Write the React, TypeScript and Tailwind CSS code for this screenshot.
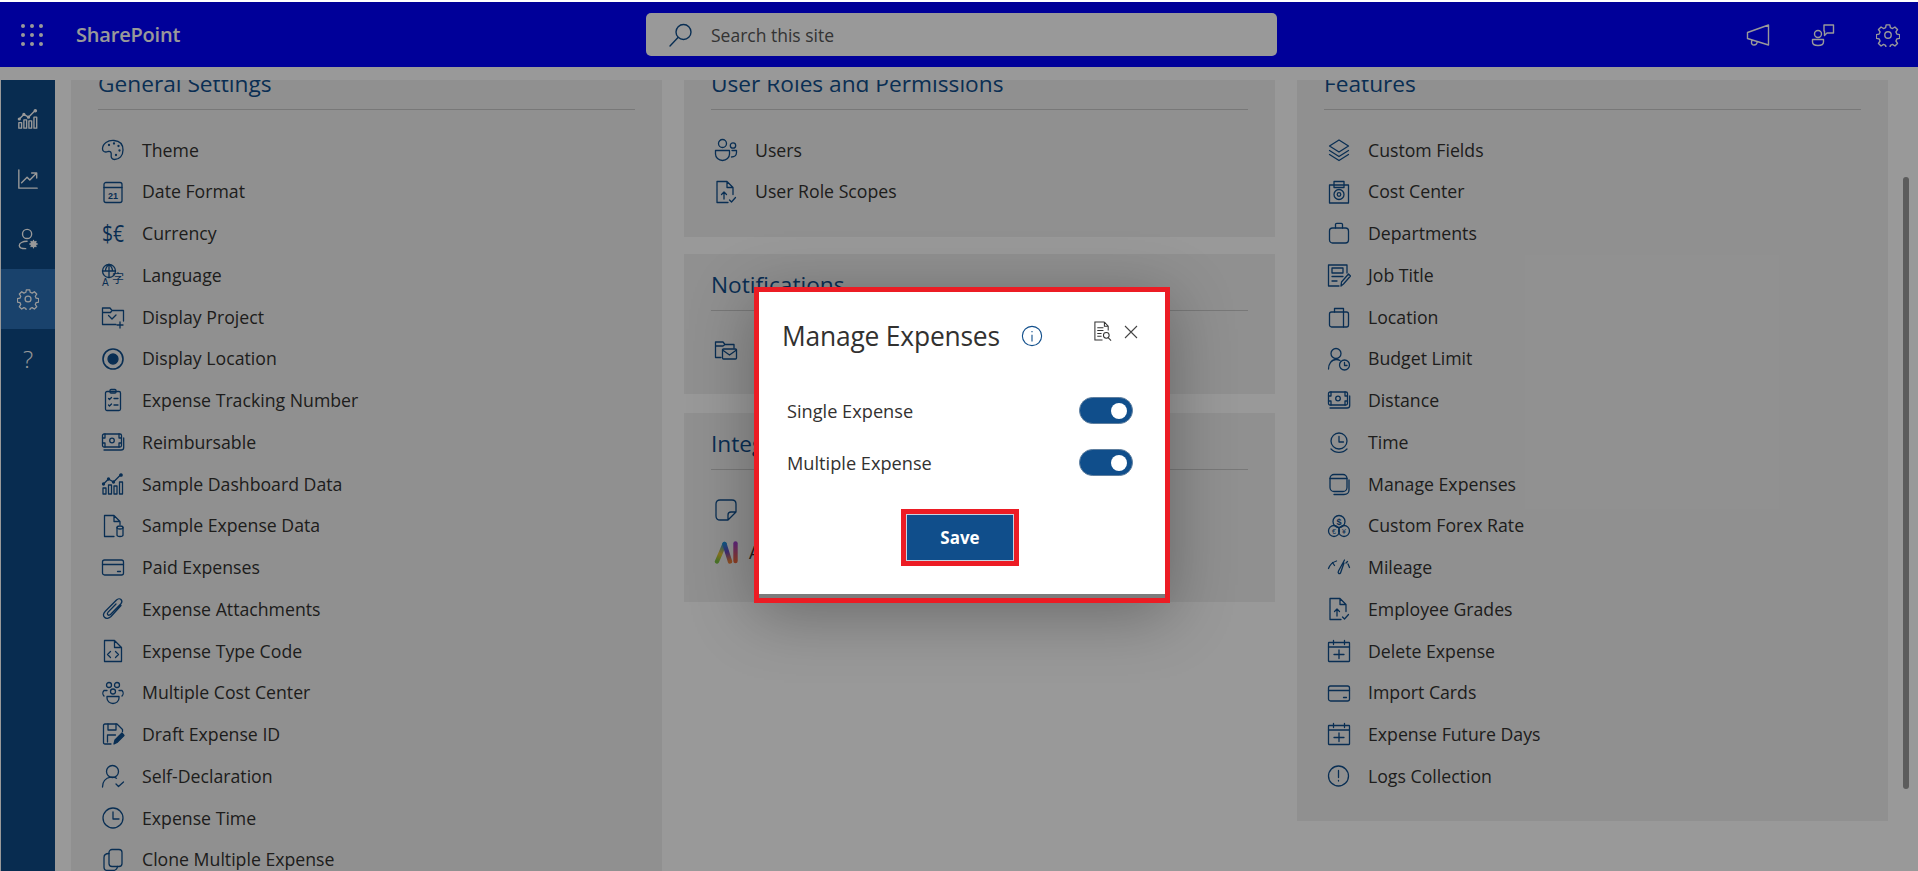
import React from "react";

const BLUE = "#104e8b";

function Ico({ children }: { children: React.ReactNode }) {
  return (
    <svg viewBox="0 0 24 24" className="w-6 h-6 shrink-0" fill="none" stroke={BLUE} strokeWidth={1.3} strokeLinecap="round" strokeLinejoin="round">
      {children}
    </svg>
  );
}

const Bars = () => (
  <>
    <path d="M2 22v-6h3v6zM7.5 22v-9h3v9zM13 22v-8h3v8zM18.5 22V10h3v12z" />
    <path d="M2.5 12l5-5 5 3 7-7" />
    <circle cx="2.5" cy="12" r="1" fill="currentColor" />
    <circle cx="7.5" cy="7" r="1" fill="currentColor" />
    <circle cx="12.5" cy="10" r="1" fill="currentColor" />
    <circle cx="20" cy="3" r="1.2" fill="currentColor" />
  </>
);
const Money = () => (
  <>
    <rect x="1.5" y="4" width="19" height="13" rx="1.5" />
    <circle cx="11" cy="10.5" r="2.3" />
    <path d="M1.5 8h2.5V4M20.5 8H18V4M1.5 13H4v4M20.5 13H18v4M3 20h17c1.6 0 2.7-1 2.7-2.6V8" />
  </>
);
const Card = () => (
  <>
    <rect x="1.5" y="5" width="21" height="15" rx="2" />
    <path d="M1.5 9.5h21M16.5 16.5h3" />
  </>
);
const CalPlus = () => (
  <>
    <rect x="1.5" y="3.5" width="21" height="19" rx="0.5" />
    <path d="M1.5 8h21M6.5 1.5v4M17.5 1.5v4M12 11v8.5M7 15.5h10" />
  </>
);
const FileUp = () => (
  <>
    <path d="M13 1.5H3v21h11M13 1.5l6 6v7M13 1.5v6h6" />
    <path d="M10 19v-7M7.5 14.5L10 12l2.5 2.5M15.5 20l2 2 4-4.5" />
  </>
);

const icons: Record<string, React.ReactNode> = {
  theme: (
    <Ico>
      <path d="M13 2.5C7 2 1.5 5.5 1.5 11c0 3 3 3.5 5.5 2.5 2.5-.7 3.5 1 3.2 3.4-.4 2.7.8 4.6 3.3 4.6 5 0 8.5-4 8.5-9.5S18.5 3 13 2.5z" />
      <circle cx="8" cy="7" r=".5" fill={BLUE} />
      <circle cx="13" cy="5.5" r=".5" fill={BLUE} />
      <circle cx="17.5" cy="8" r=".5" fill={BLUE} />
      <circle cx="18.5" cy="12.5" r=".5" fill={BLUE} />
      <circle cx="15" cy="17" r=".5" fill={BLUE} />
    </Ico>
  ),
  date: (
    <Ico>
      <rect x="3" y="2.5" width="18" height="20" rx="2" />
      <path d="M3 7.5h18" />
      <text x="12" y="18.5" textAnchor="middle" fontSize="9" fontWeight="700" fill={BLUE} stroke="none" fontFamily="'Liberation Sans', sans-serif">21</text>
    </Ico>
  ),
  currency: (
    <Ico>
      <text x="12" y="20.500" textAnchor="middle" fontSize="24" fontWeight="400" fill={BLUE} stroke="none" fontFamily="'Open Sans', sans-serif" textLength="22" lengthAdjust="spacingAndGlyphs">$€</text>
    </Ico>
  ),
  language: (
    <Ico>
      <circle cx="8" cy="8" r="6.5" />
      <path d="M1.5 8h13M8 1.5v13M4.5 8c0-3 1.500-5 3.500-6.500M11.500 8c0-3-1.500-5-3.500-6.500" />
      <text x="1" y="23" fontSize="10" fill={BLUE} stroke="none" fontFamily="'Liberation Sans', sans-serif">A</text>
      <text x="11" y="20" fontSize="12" fill={BLUE} stroke="none" fontFamily="'Noto Sans CJK SC', sans-serif">字</text>
    </Ico>
  ),
  project: (
    <Ico>
      <path d="M15 19.500H1.500V3h7.500l2 2.500h11.500V16M1.500 7.500h8l1.500-2" />
      <path d="M7.500 10.500L11 14l4-4M19 17v6M16 20h6" />
    </Ico>
  ),
  location: (
    <Ico>
      <circle cx="12" cy="12" r="10" strokeWidth={1.6} />
      <circle cx="12" cy="12" r="5" fill={BLUE} />
    </Ico>
  ),
  tracking: (
    <Ico>
      <rect x="4.500" y="3.500" width="15" height="19" rx="1.500" />
      <rect x="9" y="1.500" width="6" height="3.500" rx="1" />
      <path d="M7.500 10.500l1 1 2-2M13 10.500h4M7.500 17l1 1 2-2M13 17h4" />
    </Ico>
  ),
  money: <Ico><Money /></Ico>,
  bars: <Ico><g className="text-[#104e8b]"><Bars /></g></Ico>,
  sampleExp: (
    <Ico>
      <path d="M13 1.500H3.500v21H13M13 1.500l6 6v3M13 1.500v6h6" />
      <ellipse cx="19" cy="13.500" rx="3" ry="1.500" />
      <path d="M16 13.500v7.500c0 1 1.300 1.500 3 1.500s3-.5 3-1.500v-7.500" />
    </Ico>
  ),
  card: <Ico><Card /></Ico>,
  clip: (
    <Ico>
      <path d="M20 8.500l-10 11c-2 2-5 2.500-6.500.8-1.500-1.500-1-4 .8-6L15.500 3c1.500-1.500 3.500-1.500 4.500-.5 1.200 1.200 1 3-.3 4.500L9.500 17.500c-.8.8-2 1-2.700.3-.7-.7-.5-1.800.3-2.700L15 7" />
    </Ico>
  ),
  code: (
    <Ico>
      <path d="M13.500 1.500H3.500v21h17V8.500zM13.500 1.500v7h7" />
      <path d="M9.500 12.500l-3 3 3 3M14.500 12.500l3 3-3 3" />
    </Ico>
  ),
  costGroup: (
    <Ico>
      <circle cx="8" cy="4" r="2.500" />
      <circle cx="16" cy="4" r="2.500" />
      <circle cx="12" cy="10.500" r="2.500" />
      <path d="M3 15c-1.500-1.500-1.500-4 0-5.500h3M21 15c1.500-1.500 1.500-4 0-5.500h-3M6 15.500h12v1.500c0 3-2.500 5.500-6 5.500s-6-2.500-6-5.500z" />
    </Ico>
  ),
  draft: (
    <Ico>
      <path d="M10 22H4c-1 0-1.500-.5-1.500-1.500V3.500c0-1 .5-1.500 1.500-1.500h12l5.500 5.500v2" />
      <path d="M7 2v6h8V2M6.500 20v-7h8" />
      <path d="M13 22l1-4 7-7 2 2.500-7 7z" fill={BLUE} />
    </Ico>
  ),
  self: (
    <Ico>
      <circle cx="11.500" cy="7.500" r="6" />
      <path d="M1.500 23c0-5 3-9 8-9.800 2-.3 4.500 0 6 1M15 20l2.500 2.500L22.500 18" />
    </Ico>
  ),
  clock: (
    <Ico>
      <circle cx="12" cy="12" r="10" />
      <path d="M12 6v7h6" />
    </Ico>
  ),
  clone: (
    <Ico>
      <rect x="8" y="1.500" width="13" height="17" rx="3" />
      <path d="M8 5.500C5 5.500 3 7 3 9.500V19c0 2.500 1.500 3.500 3.500 3.500H12c2.500 0 4-1 4.500-4" />
    </Ico>
  ),
  users: (
    <Ico>
      <circle cx="8.500" cy="5.500" r="4" />
      <circle cx="19" cy="7.500" r="2.700" />
      <path d="M1.500 12.500h14v3.500c0 3.500-3 6.500-7 6.500s-7-3-7-6.500zM18 12.500h4.500v2c0 2.500-2 4.500-5 4.500" />
    </Ico>
  ),
  fileUp: <Ico><FileUp /></Ico>,
  mailFolder: (
    <Ico>
      <path d="M7 19.500H1.500V4H9l2 2.500h9V10M1.500 8h7.500l2-1.500" />
      <rect x="8.500" y="11" width="14" height="10" rx="1" />
      <path d="M8.500 12l7 5 7-5" />
    </Ico>
  ),
  note: (
    <Ico>
      <path d="M14 22H6c-2.500 0-4-1.500-4-4V6c0-2.500 1.500-4 4-4h12c2.500 0 4 1.500 4 4v8zM22 14h-5c-2 0-3 1-3 3v5" />
    </Ico>
  ),
  ai: (
    <svg viewBox="0 0 24 24" className="w-6 h-6 shrink-0" fill="none" strokeWidth={4.4} strokeLinecap="round" strokeLinejoin="round">
      <defs>
        <linearGradient id="aig1" gradientUnits="userSpaceOnUse" x1="3" y1="21" x2="10" y2="3">
          <stop offset="0" stopColor="#7cc243" />
          <stop offset="0.4" stopColor="#e8c030" />
          <stop offset="1" stopColor="#1f8fd8" />
        </linearGradient>
        <linearGradient id="aig2" gradientUnits="userSpaceOnUse" x1="10" y1="3" x2="16" y2="21">
          <stop offset="0" stopColor="#1f8fd8" />
          <stop offset="0.5" stopColor="#6a48c0" />
          <stop offset="1" stopColor="#e8803c" />
        </linearGradient>
        <linearGradient id="aig3" gradientUnits="userSpaceOnUse" x1="0" y1="3" x2="0" y2="21">
          <stop offset="0" stopColor="#a040c8" />
          <stop offset="1" stopColor="#e8643c" />
        </linearGradient>
      </defs>
      <path d="M3 21.500L10.500 4" stroke="url(#aig1)" />
      <path d="M10.500 4L16 21.500" stroke="url(#aig2)" />
      <path d="M21.500 3.500V21" stroke="url(#aig3)" />
    </svg>
  ),
  layers: (
    <Ico>
      <path d="M12 2L2.500 8l9.500 6 9.500-6zM2.500 12.500l9.500 6 9.500-6M2.500 16.500l9.500 6 9.500-6" />
    </Ico>
  ),
  costCenter: (
    <Ico>
      <rect x="2.500" y="5" width="19" height="18" />
      <rect x="7" y="1.500" width="10" height="6" fill="none" />
      <circle cx="12" cy="14.500" r="5" />
      <circle cx="12" cy="14.500" r="1.800" />
    </Ico>
  ),
  brief: (
    <Ico>
      <rect x="2.500" y="7" width="19" height="15" rx="3" />
      <path d="M8.500 7V3.500c0-.8.500-1.200 1.200-1.200h4.600c.7 0 1.200.4 1.200 1.200V7" />
    </Ico>
  ),
  job: (
    <Ico>
      <path d="M20 10V2H1.500v21H12" />
      <rect x="5" y="5" width="11" height="5" />
      <path d="M5 13.500h11M5 18h5M14 23l.5-4 7-8 2 2-7 8z" />
    </Ico>
  ),
  locBrief: (
    <Ico>
      <rect x="2.500" y="7" width="19" height="15" rx="2" />
      <path d="M7.500 7V3.500h9V7M16.500 7v15" />
    </Ico>
  ),
  budget: (
    <Ico>
      <circle cx="9" cy="6.500" r="5" />
      <path d="M1.500 22c0-5 3-9.500 7.500-9.500 1.500 0 3 .4 4 1" />
      <circle cx="17.500" cy="18" r="5" />
      <path d="M17.500 15.500V18.500h2.500" />
    </Ico>
  ),
  timeArc: (
    <Ico>
      <circle cx="12" cy="11" r="8" />
      <path d="M12 6.500V12h4.500M4 19c4.500 4.500 11.500 4.500 16 0" />
    </Ico>
  ),
  stack: (
    <Ico>
      <rect x="3" y="2.500" width="17" height="17" rx="4" />
      <path d="M3 6.500h17M22 8v10c0 2.500-2 4.500-5 4.500H7" />
    </Ico>
  ),
  forex: (
    <Ico>
      <circle cx="12" cy="7.500" r="6" />
      <circle cx="7" cy="17" r="5.500" />
      <circle cx="17" cy="17" r="5.500" />
      <text x="12" y="11" textAnchor="middle" fontSize="9" fontWeight="700" fill={BLUE} stroke="none" fontFamily="'Liberation Sans', sans-serif">$</text>
      <text x="7" y="20" textAnchor="middle" fontSize="7" fill={BLUE} stroke="none" fontFamily="'Liberation Sans', sans-serif">€</text>
      <text x="17" y="20" textAnchor="middle" fontSize="7" fill={BLUE} stroke="none" fontFamily="'Liberation Sans', sans-serif">¥</text>
    </Ico>
  ),
  gauge: (
    <Ico>
      <path d="M1.500 13.500C3 9.500 6 7 9.500 6M5.500 7.500l2 3M21 9l1.500 3.500M19 8l1.500-1.500M17.500 5l-6 11c-1 2 .5 3.500 2 2L17 8" />
    </Ico>
  ),
  calPlus: <Ico><CalPlus /></Ico>,
  alert: (
    <Ico>
      <circle cx="11.500" cy="12" r="10" />
      <path d="M11.500 6.500v7M11.500 16.500v.5" />
    </Ico>
  ),
};

const general: [string, string][] = [
  ["theme", "Theme"], ["date", "Date Format"], ["currency", "Currency"], ["language", "Language"],
  ["project", "Display Project"], ["location", "Display Location"], ["tracking", "Expense Tracking Number"],
  ["money", "Reimbursable"], ["bars", "Sample Dashboard Data"], ["sampleExp", "Sample Expense Data"],
  ["card", "Paid Expenses"], ["clip", "Expense Attachments"], ["code", "Expense Type Code"],
  ["costGroup", "Multiple Cost Center"], ["draft", "Draft Expense ID"], ["self", "Self-Declaration"],
  ["clock", "Expense Time"], ["clone", "Clone Multiple Expense"],
];
const features: [string, string][] = [
  ["layers", "Custom Fields"], ["costCenter", "Cost Center"], ["brief", "Departments"], ["job", "Job Title"],
  ["locBrief", "Location"], ["budget", "Budget Limit"], ["money", "Distance"], ["timeArc", "Time"],
  ["stack", "Manage Expenses"], ["forex", "Custom Forex Rate"], ["gauge", "Mileage"], ["fileUp", "Employee Grades"],
  ["calPlus", "Delete Expense"], ["card", "Import Cards"], ["calPlus", "Expense Future Days"], ["alert", "Logs Collection"],
];

function Row({ icon, label }: { icon: string; label: string }) {
  return (
    <div className={`flex items-center h-[41.75px] pl-[3px] ${icon === "ai" ? "gap-[11px]" : "gap-[17px]"}`}>
      {icons[icon]}
      <span className="text-[17.7px] text-[#323130] whitespace-nowrap">{label}</span>
    </div>
  );
}

function Section({ title, rows, className }: { title: string; rows: [string, string][]; className: string }) {
  return (
    <section className={`bg-[#f1f1f1] px-[27px] ${className}`}>
      <h2 className="h-[57px] pt-[15px] text-[22.7px] leading-[32px] text-[#104e8b] border-b border-[#c8c8c8] whitespace-nowrap">{title}</h2>
      <div className="pt-[19px]">
        {rows.map(([i, l]) => (
          <Row key={l} icon={i} label={l} />
        ))}
      </div>
    </section>
  );
}

function NavIcon({ children, active }: { children: React.ReactNode; active?: boolean }) {
  return (
    <div className={`h-[60px] flex items-center justify-center text-white ${active ? "bg-[#2a6fb5]" : ""}`}>
      <svg viewBox="0 0 24 24" className="w-[22px] h-[22px]" fill="none" stroke="#ffffff" strokeWidth={1.5} strokeLinecap="round" strokeLinejoin="round">
        {children}
      </svg>
    </div>
  );
}

const gearPath =
  "M10 2h4l.6 3 2.300 1 2.600-1.700 2.800 2.800-1.700 2.600 1 2.300 3 .6v4l-3 .6-1 2.300 1.700 2.600-2.800 2.800-2.600-1.700-2.300 1-.6 3h-4l-.6-3-2.300-1-2.600 1.700-2.800-2.800 1.700-2.600-1-2.300-3-.6v-4l3-.6 1-2.300-1.700-2.600 2.800-2.800 2.600 1.700 2.300-1z";

function Gear({ size = 24 }: { size?: number }) {
  return (
    <svg viewBox="-1 -1 26 26" width={size} height={size} fill="none" stroke="currentColor" strokeWidth={1.5} strokeLinejoin="round">
      <path d={gearPath} transform="translate(0 -1)" />
      <circle cx="12" cy="12" r="3.500" />
    </svg>
  );
}

function Toggle() {
  return (
    <div className="w-[54px] h-[27px] rounded-full bg-[#104e8b] border border-[#5f7f9f] flex items-center justify-end pr-[5px]">
      <div className="w-4 h-4 rounded-full bg-white" />
    </div>
  );
}

export default function App() {
  return (
    <div className="h-[871px] overflow-hidden bg-white" style={{ fontFamily: "'Open Sans', 'Noto Sans', sans-serif" }}>
      <div className="h-[2px] bg-white" />
      <div className="relative h-[869px] bg-white overflow-hidden">
        <header className="h-[65px] bg-[#0000ff] flex items-center text-white">
          <div className="ml-[21px] w-[22px] grid grid-cols-3 gap-[5px]">
            {Array.from({ length: 9 }).map((_, i) => (
              <span key={i} className="w-[4px] h-[4px] rounded-full bg-white" />
            ))}
          </div>
          <span className="ml-[33px] w-[105px] text-[20px] font-semibold tracking-[-0.2px] leading-none">SharePoint</span>
          <div className="ml-[465px] w-[631px] h-[43px] rounded-[5px] bg-white flex items-center pl-[23px] gap-[18px]">
            <svg viewBox="0 0 24 24" className="w-6 h-6" fill="none" stroke={BLUE} strokeWidth={1.4} strokeLinecap="round">
              <circle cx="14.500" cy="9" r="7.500" />
              <path d="M9 14.500L1 23" />
            </svg>
            <span className="pt-[2px] text-[17.5px] text-[#555]">Search this site</span>
          </div>
          <div className="ml-auto mr-[18px] flex items-center gap-[41px]">
            <svg viewBox="0 0 24 24" className="w-6 h-6" fill="none" stroke="currentColor" strokeWidth={1.4} strokeLinejoin="round">
              <path d="M1.500 9.500L22.500 2v20L1.500 15.500zM6 17l-.5 2c-.3 2 1 3 2.500 3s3-1 3.200-3" />
            </svg>
            <svg viewBox="0 0 24 24" className="w-6 h-6" fill="none" stroke="currentColor" strokeWidth={1.4} strokeLinejoin="round">
              <circle cx="7" cy="11" r="3.500" />
              <path d="M1.500 16.500h11v2.500c0 2.500-2.500 3.500-5.500 3.500s-5.500-1-5.500-3.500zM13 2h9.500v8H16l-2.500 2.500V8H13z" />
            </svg>
            <span className="block"><Gear /></span>
          </div>
        </header>

        <div className="flex mt-[13px] h-[791px]">
          <nav className="ml-px w-[54px] bg-[#0e4a85] pt-[9px] shrink-0">
            <NavIcon><Bars /></NavIcon>
            <NavIcon>
              <path d="M2 2v20h20M5 16l6-6 3 3 7-7M16 5.500h5.500V11" />
            </NavIcon>
            <NavIcon>
              <circle cx="11" cy="6.500" r="5" />
              <path d="M11 14.500c-5 0-8.500 2-8.500 4.500s3 3.500 7 3.500" />
              <circle cx="18" cy="17.500" r="2.600" fill="#ffffff" />
              <path d="M18 13.500v1.400M18 20v1.500M14 17.500h1.400M20.600 17.500H22M15.300 14.800l1 1M19.700 19.200l1 1M20.700 14.800l-1 1M16.300 19.200l-1 1" />
            </NavIcon>
            <NavIcon active>
              <g transform="translate(1 1) scale(.92)">
                <path d={gearPath} transform="translate(0 -1)" />
                <circle cx="12" cy="12" r="3.500" />
              </g>
            </NavIcon>
            <div className="h-[60px] flex items-center justify-center text-[24px] font-light text-white">?</div>
          </nav>

          <div className="ml-4 w-[1817px] shrink-0 overflow-hidden">
            <div className="-mt-[27px] grid grid-cols-3 gap-x-[22px] items-start">
              <Section title="General Settings" rows={general} className="pb-10" />
              <div className="flex flex-col gap-[17px]">
                <Section title="User Roles and Permissions" rows={[["users", "Users"], ["fileUp", "User Role Scopes"]]} className="pb-[24px]" />
                <Section title="Notifications" rows={[["mailFolder", "Email Notifications"]]} className="pb-[23px]" />
                <Section title="Integrations" rows={[["note", "Teams Notes"], ["ai", "AI Assistant"]]} className="mt-[2px] pb-[29.5px]" />
              </div>
              <Section title="Features" rows={features} className="pb-[24px]" />
            </div>
          </div>

          <div className="ml-[15px] w-[6px] pt-[97px]">
            <div className="h-[612px] bg-[#999] rounded-full" />
          </div>
        </div>

        <div className="absolute inset-0 bg-black/40" />

        <div className="absolute left-[754px] top-[285px] w-[416px] h-[316px] border-[5px] border-[#ec1c24] bg-white shadow-[0_12px_60px_rgba(0,0,0,0.3)] flex flex-col">
          <div className="flex-1 flex flex-col border-b-[4px] border-[#7c7c7c]">
            <div className="mt-[22px] pl-[23px] h-[44px] flex items-center">
              <span className="text-[26.4px] font-medium text-[#323130] leading-none tracking-[-0.2px]">Manage Expenses</span>
              <svg viewBox="0 0 24 24" className="ml-[21px] w-[22px] h-[22px]" fill="none" stroke={BLUE} strokeWidth={1.2}>
                <circle cx="12" cy="12" r="10.500" />
                <path d="M12 10.500V18M12 6.500v1.500" />
              </svg>
              <div className="ml-auto mr-[27px] self-start mt-[7px] flex items-center gap-[12px]">
                <svg viewBox="0 0 20 22" className="w-[19px] h-[21px]" fill="none" stroke="#333" strokeWidth={1.1}>
                  <path d="M12 1H2v19h8M12 1l4 4.500V10M12 1v4.500h4M4.500 7H11M4.500 10H11M4.500 13H9M4.500 16H9" />
                  <circle cx="14" cy="15" r="3" />
                  <path d="M16 17.500l3 3" />
                </svg>
                <svg viewBox="0 0 14 14" className="w-[14px] h-[14px]" fill="none" stroke="#444" strokeWidth={1.1}>
                  <path d="M1 1l12 12M13 1L1 13" />
                </svg>
              </div>
            </div>
            <div className="mt-[39px] pl-[28px] pr-[32px] flex flex-col gap-[25px]">
              <div className="flex items-center justify-between h-[27px]">
                <span className="pt-[2px] text-[18.2px] leading-none font-medium text-[#323130]">Single Expense</span>
                <Toggle />
              </div>
              <div className="flex items-center justify-between h-[27px]">
                <span className="pt-[2px] text-[18.2px] leading-none font-medium text-[#323130]">Multiple Expense</span>
                <Toggle />
              </div>
            </div>
            <button className="mt-[33px] self-center mr-[4px] w-[118px] h-[57px] border-[5px] border-[#ec1c24] bg-[#104e8b] text-white text-[17px] font-bold outline-none">
              <span className="flex items-center justify-center h-full border border-[#c7d3df]">Save</span>
            </button>
          </div>
        </div>
      </div>
    </div>
  );
}
